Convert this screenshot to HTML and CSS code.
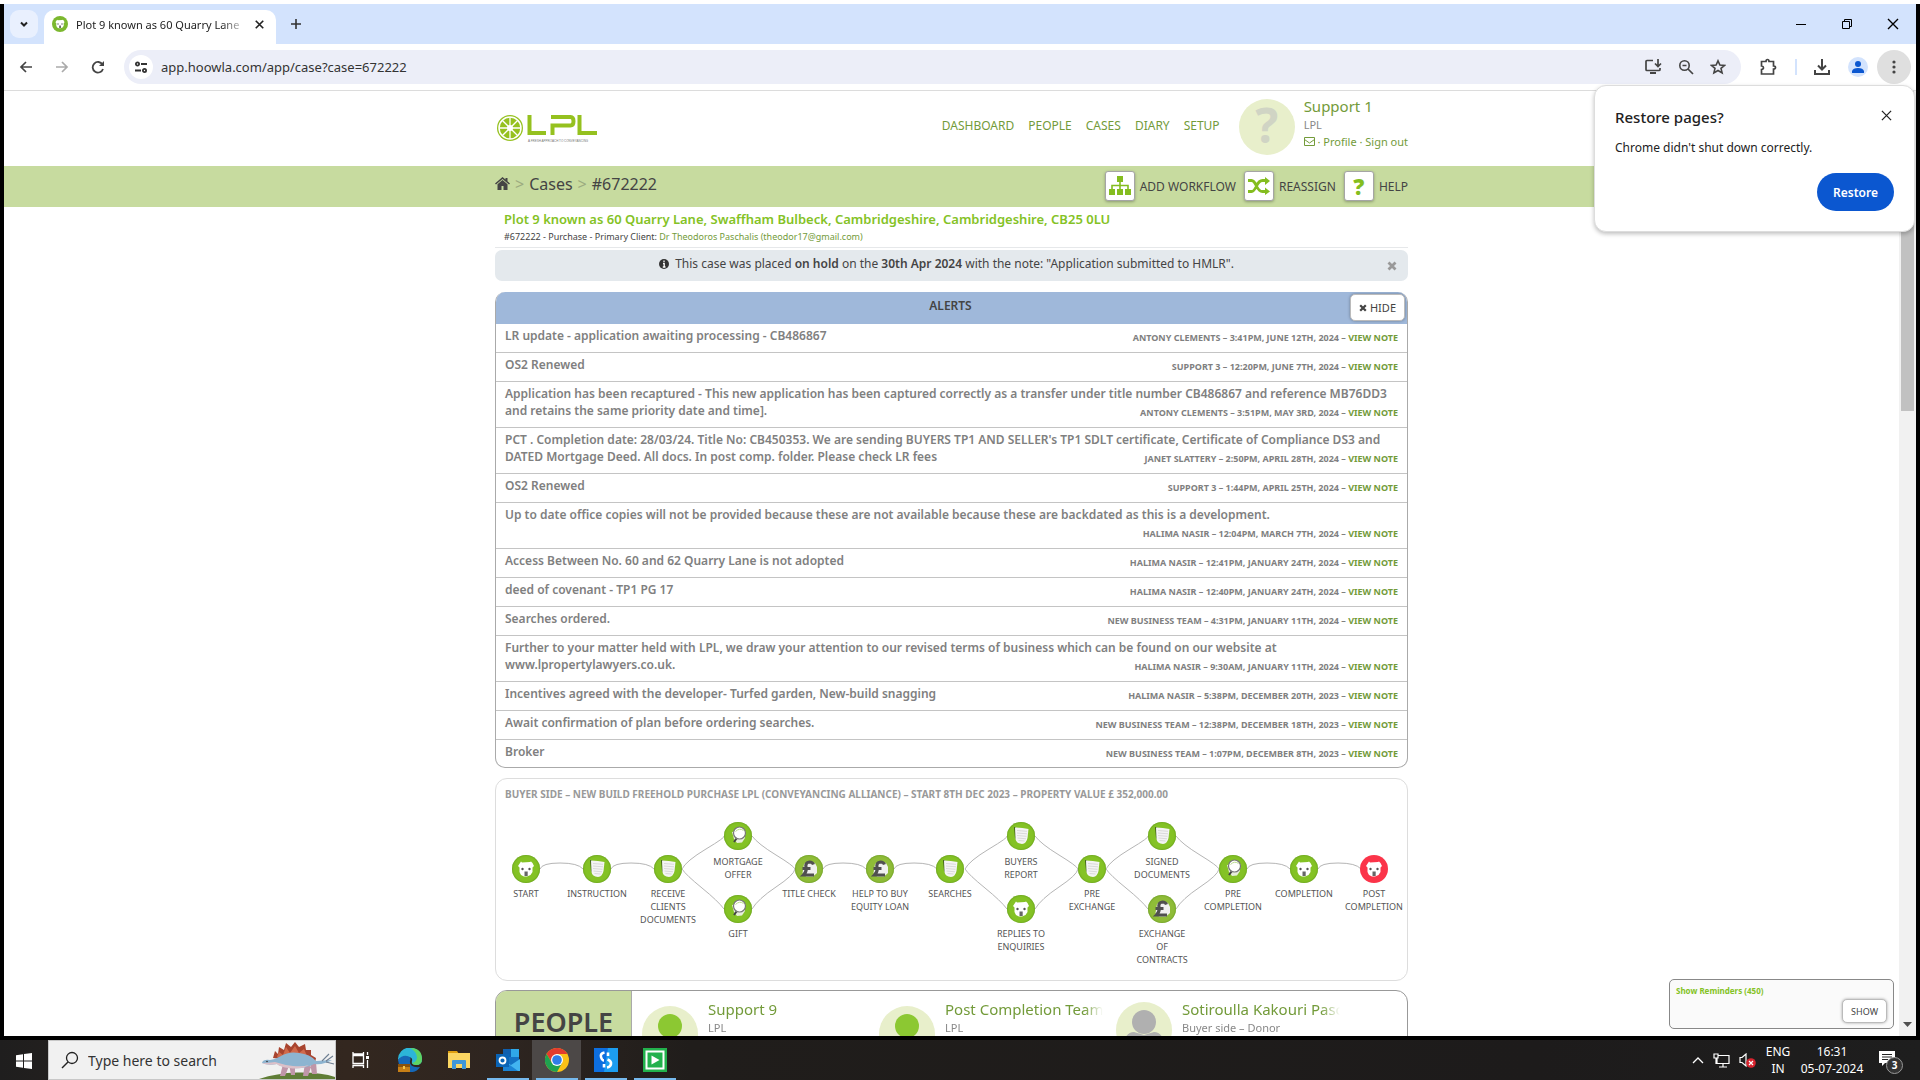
FILE: index.html
```html
<!DOCTYPE html>
<html lang="en">
<head>
<meta charset="utf-8">
<title>Plot 9 known as 60 Quarry Lane</title>
<link rel="stylesheet" href="styles.css">
</head>
<body>
<svg class="defs" aria-hidden="true">
  <defs>
    <symbol id="i-house" viewBox="0 0 28 28">
      <path d="M6 11l2-3 1-1.500 1 1 8-.5 1-.5 1.500 1.500L22 11l-1.500 1.500V17l-2 3-3.500 1.500h-3L9 20l-1.500-3v-4.500z" fill="#fff"/>
      <circle cx="10.500" cy="14" r="1.200" fill="#555"/><circle cx="17.500" cy="14" r="1.200" fill="#555"/>
      <path d="M12.500 16.500h3.200V21h-3.200z" fill="#666"/>
    </symbol>
    <symbol id="i-doc" viewBox="0 0 28 28">
      <path d="M7 5l2 .5v12L8 16z" fill="#3d5a1e"/>
      <path d="M8 5.500q7 0 13.500 1.500l-1 9q-1 5.500-5.500 6-6-.5-6.500-5z" fill="#f4f4f4"/>
      <path d="M10 8.500l10 .8M10 11l10 .8M10 13.500l9.500 .8M10.500 16l8.500 .8M11.500 18.500l6 .5" stroke="#d2d2d2" stroke-width=".8"/>
    </symbol>
    <symbol id="i-lens" viewBox="0 0 28 28">
      <path d="M8 10l2 7 3 4 5-.5 3-4.500 0-8z" fill="#e8eedd"/>
      <path d="M12.500 16.500l-2.500 3.500" stroke="#444" stroke-width="2"/>
      <circle cx="15.500" cy="11" r="6" fill="#fff" stroke="#777" stroke-width="1.200"/>
      <path d="M11.500 9.500q4-4 8-1" stroke="#b9d98c" fill="none"/>
    </symbol>
    <symbol id="i-pound" viewBox="0 0 28 28">
      <path d="M9 9l5-2.500 6 1.500 2 4v6l-4 3.500h-7L7.500 18z" fill="#f0f0f0"/>
      <path d="M18.500 9.500q-1-2.500-4-2.500-4.500.5-3.500 5.500.8 4-2.500 7.500H19M7.500 13.500h8" fill="none" stroke="#505050" stroke-width="3.200"/>
    </symbol>
    <symbol id="i-x" viewBox="0 0 10 10"><path d="M1.500 1.500l7 7M8.500 1.500l-7 7" stroke="currentColor" stroke-width="2.800"/></symbol>
    <symbol id="i-thin" viewBox="0 0 12 12"><path d="M1 1l10 10M11 1L1 11" stroke="currentColor" stroke-width="1.400"/></symbol>
    <symbol id="i-bold" viewBox="0 0 12 12"><path d="M1 1l10 10M11 1L1 11" stroke="currentColor" stroke-width="2.200"/></symbol>
  </defs>
</svg>

<div class="browser">
  <div class="tabstrip">
    <button class="tabsearch" aria-label="Search tabs"><svg width="10" height="10" viewBox="0 0 10 10"><path d="M2 3.500l3 3 3-3" fill="none" stroke="#222" stroke-width="2"/></svg></button>
    <div class="tab">
      <svg class="favicon" width="16" height="16" viewBox="0 0 28 28"><circle cx="14" cy="14" r="14" fill="#7cb82f"/><use href="#i-house"/></svg>
      <span class="tabtitle">Plot 9 known as 60 Quarry Lane</span>
      <button class="plain" aria-label="Close tab"><svg width="9" height="9"><use href="#i-bold"/></svg></button>
    </div>
    <button class="plain newtab" aria-label="New tab"><svg width="12" height="12" viewBox="0 0 12 12"><path d="M6 1v10M1 6h10" stroke="#333" stroke-width="1.600"/></svg></button>
    <div class="winbtns">
      <button class="plain" aria-label="Minimise"><svg width="12" height="12" viewBox="0 0 12 12"><path d="M1 6.500h10" stroke="#000"/></svg></button>
      <button class="plain" aria-label="Restore window"><svg width="12" height="12" viewBox="0 0 12 12"><path d="M1.500 3.500h7v7h-7zM3.500 3.500v-2h7v7h-2" fill="none" stroke="#000"/></svg></button>
      <button class="plain" aria-label="Close window"><svg width="12" height="12"><use href="#i-thin"/></svg></button>
    </div>
  </div>

  <div class="toolbar">
    <div class="navbtns">
      <button class="plain" aria-label="Back"><svg width="14" height="14" viewBox="0 0 14 14"><path d="M13 7H2M7 2L2 7l5 5" fill="none" stroke="#444" stroke-width="1.700"/></svg></button>
      <button class="plain" aria-label="Forward"><svg width="14" height="14" viewBox="0 0 14 14"><path d="M1 7h11M7 2l5 5-5 5" fill="none" stroke="#aaa" stroke-width="1.700"/></svg></button>
      <button class="plain" aria-label="Reload"><svg width="14" height="14" viewBox="0 0 14 14"><path d="M11.500 4.500A5.300 5.300 0 1 0 12 9" fill="none" stroke="#444" stroke-width="1.800"/><path d="M13 1v5H8z" fill="#444"/></svg></button>
    </div>
    <div class="omnibox">
      <span class="siteinfo"><svg width="14" height="14" viewBox="0 0 14 14"><g fill="none" stroke="#333" stroke-width="1.800"><circle cx="3.500" cy="4" r="1.600"/><path d="M7 4h6M1 10.500h6"/><circle cx="10.500" cy="10.500" r="1.600"/></g></svg></span>
      <input class="url" aria-label="Address" value="app.hoowla.com/app/case?case=672222">
      <button class="plain" aria-label="Install app"><svg width="18" height="18" viewBox="0 0 18 18"><path d="M9 2.500H3q-1 0-1 1v8q0 1 1 1h12q1 0 1-1V10" fill="none" stroke="#444" stroke-width="1.700"/><path d="M6 14h6v2H6z" fill="#444"/><path d="M14 1v7M11 5.500l3 3 3-3" fill="none" stroke="#444" stroke-width="1.700"/></svg></button>
      <button class="plain" aria-label="Zoom"><svg width="16" height="16" viewBox="0 0 16 16"><circle cx="6.500" cy="6.500" r="4.700" fill="none" stroke="#444" stroke-width="1.600"/><path d="M4.500 6.500h4M10 10l5 5" stroke="#444" stroke-width="1.700"/></svg></button>
      <button class="plain" aria-label="Bookmark"><svg width="16" height="16" viewBox="0 0 16 16"><path d="M8 1.800l1.900 4.200 4.600.4-3.500 3 1.100 4.500L8 11.500l-4.100 2.400L5 9.400l-3.500-3 4.600-.4z" fill="none" stroke="#444" stroke-width="1.600"/></svg></button>
    </div>
    <button class="plain ext" aria-label="Extensions"><svg width="18" height="18" viewBox="0 0 18 18"><path d="M2.500 3.500h4.500q0-2 1.500-2t1.500 2h4.500V8q2 0 2 1.500T14.500 11v5h-12v-4.500q2-.2 2-1.700t-2-1.800z" fill="none" stroke="#444" stroke-width="1.700"/></svg></button>
    <span class="sep"></span>
    <button class="plain dl" aria-label="Downloads"><svg width="18" height="18" viewBox="0 0 18 18"><path d="M9 1v10M5 7.500l4 4 4-4M2 12v4h14v-4" fill="none" stroke="#444" stroke-width="2"/></svg></button>
    <button class="plain profile" aria-label="Profile"><svg width="20" height="20" viewBox="0 0 20 20"><circle cx="10" cy="10" r="10" fill="#d3e3fd"/><circle cx="10" cy="7" r="3" fill="#0b57d0"/><path d="M4 16v-2q1-3 6-3t6 3v2z" fill="#0b57d0"/></svg></button>
    <button class="plain kebab" aria-label="Menu"><svg width="4" height="14" viewBox="0 0 4 14"><g fill="#444"><circle cx="2" cy="2" r="1.600"/><circle cx="2" cy="7" r="1.600"/><circle cx="2" cy="12" r="1.600"/></g></svg></button>
  </div>

  <div class="viewport">
    <div class="page">
      <header class="wrap top">
        <svg class="logo" width="102" height="32" viewBox="0 0 102 32" role="img" aria-label="LPL">
          <circle cx="15" cy="14" r="13" fill="#95c11f"/><circle cx="15" cy="14" r="11" fill="none" stroke="#fff" stroke-width="1.500"/>
          <path d="M15 3v22M4 14h22M7.200 6.200l15.600 15.600M22.800 6.200L7.200 21.800" stroke="#fff" stroke-width="1.300"/><circle cx="15" cy="14" r="3" fill="#fff"/>
          <path d="M34.500 1v18H51M57.500 21V11.500h18q3 0 3-4.200t-3-4.300H56M84.500 1v18H102" fill="none" stroke="#95c11f" stroke-width="4"/>
          <text x="33" y="28" class="tagline">A FRESH APPROACH TO CONVEYANCING</text>
        </svg>
        <nav class="mainnav"><a href="#">DASHBOARD</a><a href="#">PEOPLE</a><a href="#">CASES</a><a href="#">DIARY</a><a href="#">SETUP</a></nav>
        <span class="avatar qmark">?</span>
        <div class="who">
          <a class="name" href="#">Support 1</a>
          <span class="firm">LPL</span>
          <span class="links"><a href="#" aria-label="Mail"><svg width="11" height="9" viewBox="0 0 11 9"><path d="M.5.500h10v8H.5zM.5 2.500l5 3.500 5-3.500" fill="none" stroke="#739b3a"/></svg></a> · <a href="#">Profile</a> · <a href="#">Sign out</a></span>
        </div>
      </header>

      <div class="crumbbar">
        <div class="wrap crumbs">
          <nav class="trail" aria-label="Breadcrumb">
            <a href="#" aria-label="Home"><svg width="15" height="13" viewBox="0 0 15 13"><path d="M7.500 0L0 6.500l1 1L7.500 2 14 7.500l1-1-2.500-2.200V1h-2v1.600z" fill="#444"/><path d="M7.500 3L2.500 7.300V13h4V9h2v4h4V7.300z" fill="#444"/></svg></a>
            <i>&gt;</i><a href="#">Cases</a><i>&gt;</i><span>#672222</span>
          </nav>
          <div class="actions">
            <button class="action"><span class="box"><svg width="22" height="20" viewBox="0 0 22 20"><path d="M8 0h6v6H8zM0 13h6v6H0zM8 13h6v6H8zM16 13h6v6h-6z" fill="#84bd1f"/><path d="M11 6v7M3 13V9.500h16V13" fill="none" stroke="#84bd1f" stroke-width="1.600"/></svg></span>ADD WORKFLOW</button>
            <button class="action"><span class="box"><svg width="22" height="18" viewBox="0 0 22 18"><path d="M0 3.500h3.500Q6 3.500 8.500 9t6 5.500H18M0 14.500h3.500Q6 14.500 8.500 9t6-5.500H18" fill="none" stroke="#84bd1f" stroke-width="2.800"/><path d="M17 0l5 4-5 4zM17 10.500l5 4-5 3.500z" fill="#84bd1f"/></svg></span>REASSIGN</button>
            <button class="action"><span class="box help">?</span>HELP</button>
          </div>
        </div>
      </div>

      <main class="wrap">
        <div class="casehead">
          <h1>Plot 9 known as 60 Quarry Lane, Swaffham Bulbeck, Cambridgeshire, Cambridgeshire, CB25 0LU</h1>
          <p>#672222 - Purchase - Primary Client: <a href="#">Dr Theodoros Paschalis (theodor17@gmail.com)</a></p>
        </div>

        <div class="hold">
          <p><svg width="10" height="10" viewBox="0 0 10 10"><circle cx="5" cy="5" r="5" fill="#333"/><path d="M5 1.500v1.500M4 4.500h1.200V8M3.800 8h2.700" stroke="#fff" stroke-width="1.300" fill="none"/></svg> This case was placed <b>on hold</b> on the <b>30th Apr 2024</b> with the note: "Application submitted to HMLR".</p>
          <button class="plain" aria-label="Dismiss"><svg width="10" height="10"><use href="#i-x"/></svg></button>
        </div>

        <section class="alerts">
          <header><h2>ALERTS</h2><button class="btn"><svg width="8" height="8"><use href="#i-x"/></svg> HIDE</button></header>
          <ul>
            <li>LR update - application awaiting processing - CB486867<small>Antony Clements – 3:41pm, June 12th, 2024 – <a href="#">View note</a></small></li>
            <li>OS2 Renewed<small>Support 3 – 12:20pm, June 7th, 2024 – <a href="#">View note</a></small></li>
            <li>Application has been recaptured - This new application has been captured correctly as a transfer under title number CB486867 and reference MB76DD3 and retains the same priority date and time].<small>Antony Clements – 3:51pm, May 3rd, 2024 – <a href="#">View note</a></small></li>
            <li>PCT . Completion date: 28/03/24. Title No: CB450353. We are sending BUYERS TP1 AND SELLER's TP1 SDLT certificate, Certificate of Compliance DS3 and DATED Mortgage Deed. All docs. In post comp. folder. Please check LR fees<small>Janet Slattery – 2:50pm, April 28th, 2024 – <a href="#">View note</a></small></li>
            <li>OS2 Renewed<small>Support 3 – 1:44pm, April 25th, 2024 – <a href="#">View note</a></small></li>
            <li>Up to date office copies will not be provided because these are not available because these are backdated as this is a development.<small>Halima Nasir – 12:04pm, March 7th, 2024 – <a href="#">View note</a></small></li>
            <li>Access Between No. 60 and 62 Quarry Lane is not adopted<small>Halima Nasir – 12:41pm, January 24th, 2024 – <a href="#">View note</a></small></li>
            <li>deed of covenant - TP1 PG 17<small>Halima Nasir – 12:40pm, January 24th, 2024 – <a href="#">View note</a></small></li>
            <li>Searches ordered.<small>New Business Team – 4:31pm, January 11th, 2024 – <a href="#">View note</a></small></li>
            <li>Further to your matter held with LPL, we draw your attention to our revised terms of business which can be found on our website at www.lpropertylawyers.co.uk.<small>Halima Nasir – 9:30am, January 11th, 2024 – <a href="#">View note</a></small></li>
            <li>Incentives agreed with the developer- Turfed garden, New-build snagging<small>Halima Nasir – 5:38pm, December 20th, 2023 – <a href="#">View note</a></small></li>
            <li>Await confirmation of plan before ordering searches.<small>New Business Team – 12:38pm, December 18th, 2023 – <a href="#">View note</a></small></li>
            <li>Broker<small>New Business Team – 1:07pm, December 8th, 2023 – <a href="#">View note</a></small></li>
          </ul>
        </section>

        <section class="flow">
          <h2>BUYER SIDE – NEW BUILD FREEHOLD PURCHASE LPL (CONVEYANCING ALLIANCE) – START 8TH DEC 2023 – PROPERTY VALUE £ 352,000.00</h2>
          <div class="canvas">
            <svg class="links-layer" width="911" height="160" viewBox="0 0 911 160" fill="none" stroke="#b5b5b5">
              <path d="M44 58q2-6 20-6t23 6M115 58q2-6 20-6t23 6M327 58q2-6 20-6t23 6M398 58q2-6 20-6t23 6M751 58q2-6 20-6t23 6M822 58q2-6 20-6t23 6"/>
              <path d="M186 58Q190 50 210 38T228 25M256 25Q262 33 280 44T299 58M186 58Q190 64 206 77T228 98M256 98Q262 88 280 76T299 58"/>
              <path d="M469 58Q473 50 493 38T511 25M539 25Q545 33 563 44T582 58M469 58Q473 64 489 77T511 98M539 98Q545 88 563 76T582 58"/>
              <path d="M610 58Q614 50 634 38T652 25M680 25Q686 33 704 44T723 58M610 58Q614 64 630 77T652 98M680 98Q686 88 704 76T723 58"/>
            </svg>
            <div class="node c0 mid"><svg><use href="#i-house"/></svg>START</div>
            <div class="node c1 mid"><svg><use href="#i-doc"/></svg>INSTRUCTION</div>
            <div class="node c2 mid"><svg><use href="#i-doc"/></svg>RECEIVE CLIENTS DOCUMENTS</div>
            <div class="node c3 up"><svg><use href="#i-lens"/></svg>MORTGAGE OFFER</div>
            <div class="node c3 low"><svg><use href="#i-lens"/></svg>GIFT</div>
            <div class="node c4 mid money"><svg><use href="#i-pound"/></svg>TITLE CHECK</div>
            <div class="node c5 mid money"><svg><use href="#i-pound"/></svg>HELP TO BUY EQUITY LOAN</div>
            <div class="node c6 mid"><svg><use href="#i-doc"/></svg>SEARCHES</div>
            <div class="node c7 up"><svg><use href="#i-doc"/></svg>BUYERS<br>REPORT</div>
            <div class="node c7 low"><svg><use href="#i-house"/></svg>REPLIES TO ENQUIRIES</div>
            <div class="node c8 mid"><svg><use href="#i-doc"/></svg>PRE<br>EXCHANGE</div>
            <div class="node c9 up"><svg><use href="#i-doc"/></svg>SIGNED DOCUMENTS</div>
            <div class="node c9 low money"><svg><use href="#i-pound"/></svg>EXCHANGE<br>OF<br>CONTRACTS</div>
            <div class="node c10 mid"><svg><use href="#i-lens"/></svg>PRE COMPLETION</div>
            <div class="node c11 mid"><svg><use href="#i-house"/></svg>COMPLETION</div>
            <div class="node c12 mid late"><svg><use href="#i-house"/></svg>POST COMPLETION</div>
          </div>
        </section>

        <section class="people">
          <h2>PEOPLE</h2>
          <div class="person"><svg class="avatar" viewBox="0 0 56 56" fill="#8cc832"><circle cx="28" cy="20" r="12"/><path d="M8 56q0-22 20-22t20 22z"/></svg><div class="ptext"><a class="name" href="#">Support 9</a><span class="firm">LPL</span></div></div>
          <div class="person"><svg class="avatar" viewBox="0 0 56 56" fill="#8cc832"><circle cx="28" cy="20" r="12"/><path d="M8 56q0-22 20-22t20 22z"/></svg><div class="ptext"><a class="name" href="#">Post Completion Team</a><span class="firm">LPL</span></div></div>
          <div class="person donor"><svg class="avatar" viewBox="0 0 56 56" fill="#b0b0b0"><circle cx="28" cy="20" r="12"/><path d="M6 56q0-26 12-26l10 3 10-3q12 0 12 26z"/></svg><div class="ptext"><a class="name" href="#">Sotiroulla Kakouri Paschalis</a><span class="firm">Buyer side – Donor</span></div></div>
        </section>
      </main>
    </div>
    <div class="scrollbar"><span class="thumb"></span><svg width="9" height="5" viewBox="0 0 9 5"><path d="M0 0h9L4.500 5z" fill="#505050"/></svg></div>

    <aside class="reminders"><b>Show Reminders (450)</b><button class="btn">SHOW</button></aside>
  </div>

  <div class="restore" role="dialog" aria-label="Restore pages?">
    <div class="rhead"><h2>Restore pages?</h2><button class="plain" aria-label="Close"><svg width="11" height="11"><use href="#i-thin"/></svg></button></div>
    <p>Chrome didn't shut down correctly.</p>
    <button class="primary">Restore</button>
  </div>
</div>

<footer class="taskbar">
  <button class="start" aria-label="Start"><svg width="16" height="16" viewBox="0 0 16 16"><path d="M0 2.200L7 1.200V7.500H0zM8 1l8-1v7.500H8zM0 8.500h7v6.300l-7-1zM8 8.500h8V16l-8-1z" fill="#fff"/></svg></button>
  <label class="search">
    <svg width="18" height="18" viewBox="0 0 18 18"><circle cx="11" cy="7" r="5.500" fill="none" stroke="#222" stroke-width="1.300"/><path d="M7 11l-6 6" stroke="#222" stroke-width="1.500"/></svg>
    <input aria-label="Search" placeholder="Type here to search">
    <svg class="dino" width="76" height="38" viewBox="0 0 76 38">
      <path d="M0 38q18-6 38-6.500 24-.5 38 4.500v2z" fill="#5f7d36"/>
      <path d="M14 17l2-7 3 3 1-7 5 3 2-7 5 4 4-5 4 5 6-3 1 6 5 0 0 5 5 3-1 5z" fill="#a8442f"/>
      <path d="M18 16l2-5 4 3 3-8 4 6 5-7 4 7 5-4 3 7z" fill="#d06a4c"/>
      <path d="M24 23l-3 12h5l4-10zM46 22l-2 13h5l3-9zM51 22l2 11h5l-1-12zM30 23l2 11h4l0-11z" fill="#bf96a8"/>
      <path d="M3 22q1-4 8-3 6-1 11-4 8-5 18-3 11 1 17 8l16-1q-8 5-18 4-8 5-22 4-11-1-15-4-9 2-15-1z" fill="#8db4d0"/>
      <path d="M3 22q7 0 13-1 9 3 18 4 10 1 16-1-8 5-20 3-9-1-12-4-9 2-15-1z" fill="#dcc0c8"/>
      <circle cx="8" cy="20.500" r=".8" fill="#333"/>
      <path d="M63 20l7-7M67 20l7-5M67 21l8 2" stroke="#6f7f92" stroke-width="1.100"/>
    </svg>
  </label>
  <button class="task" aria-label="Task View"><svg width="18" height="18" viewBox="0 0 18 18" fill="none" stroke="#fff" stroke-width="1.300"><path d="M1 4.500h10.500v8H1zM1 1v2h10.500V1M1 17v-2.500h10.500V17M15.500 1v3M15.500 9v8"/><path d="M14 5h3v3h-3z" fill="#fff" stroke="none"/></svg></button>
  <button class="task" aria-label="Edge"><svg width="24" height="24" viewBox="0 0 24 24"><path d="M0 12A12 12 0 0 1 24 11q0 6-6 6-5 0-4-4 1-3-3-4-7-1-11 3z" fill="#2cb5d8"/><path d="M12 0q12 0 12 11 0 6-6 6-3 0-4-2 5-1 5-6Q18 3 12 0z" fill="#5ed464"/><path d="M0 12q4-5 9-4 5 1 3 5-1 7 10 6-4 6-11 5Q1 23 0 12z" fill="#1668b8"/><path d="M0 16h12v8H0z" fill="#c77f16"/><path d="M0 16h12v3H0z" fill="#8a520c"/><path d="M5 18h2v3H5z" fill="#f6c445"/></svg></button>
  <button class="task" aria-label="File Explorer"><svg width="22" height="20" viewBox="0 0 22 20"><path d="M0 1h9l2 3H0z" fill="#e0a010"/><path d="M0 3h22v15H0z" fill="#fbd662"/><path d="M4 19v-8q0-1 1-1h12q1 0 1 1v8h-4v-5H8v5z" fill="#3f97d8"/></svg></button>
  <button class="task open" aria-label="Outlook"><svg width="24" height="24" viewBox="0 0 24 24"><path d="M7 1h16v16H7z" fill="#1372c4"/><path d="M7 1h8v8H7z" fill="#0f5fae"/><path d="M15 1h8v8h-8z" fill="#2fa8e8"/><path d="M7 12l8 5 9-6v12H7z" fill="#42b4f0"/><path d="M7 12l15 11H7z" fill="#1b83d4"/><path d="M0 6h13v13H0z" fill="#0a64b6"/><circle cx="6.500" cy="12.500" r="3" fill="none" stroke="#fff" stroke-width="1.800"/></svg></button>
  <button class="task open active" aria-label="Chrome"><svg width="24" height="24" viewBox="0 0 24 24"><circle cx="12" cy="12" r="12" fill="#fbc116"/><path d="M1.600 6A12 12 0 0 1 22.400 6H12l-5 9z" fill="#e33b2e"/><path d="M1.600 6A12 12 0 0 0 12 24l5-9-10 0z" fill="#1fa250"/><circle cx="12" cy="12" r="6" fill="#fff"/><circle cx="12" cy="12" r="4.800" fill="#2f7de8"/></svg></button>
  <button class="task open" aria-label="Scan app"><svg width="24" height="24" viewBox="0 0 24 24"><path d="M0 0h24v24H0z" fill="#0d6fe0"/><path d="M14 0h10v24H10z" fill="#1c9df0"/><path d="M10.500 4.500Q6 5.500 7 9t3 3.500M10 16v3.500M14 4.500V8M13.500 11.500q4 1.500 3.500 4.500t-4 3.500" fill="none" stroke="#fff" stroke-width="2.600"/></svg></button>
  <button class="task open" aria-label="Player"><svg width="24" height="24" viewBox="0 0 24 24"><path d="M0 0h24v24H0z" fill="#22b14c"/><path d="M3.500 3.500h17v17h-17z" fill="none" stroke="#fff" stroke-width="2"/><path d="M8.500 7.500l8 4.500-8 4.500z" fill="#fff"/></svg></button>
  <div class="tray">
    <svg width="12" height="8" viewBox="0 0 12 8"><path d="M1 7l5-5 5 5" fill="none" stroke="#fff" stroke-width="1.300"/></svg>
    <svg width="17" height="15" viewBox="0 0 17 15" fill="none" stroke="#fff" stroke-width="1.200"><path d="M5 2.500h11v8H4V5M10 10.500v3M6 14h8M1 1h4v4H1zM3 5v6"/></svg>
    <svg width="17" height="15" viewBox="0 0 17 15"><path d="M1 4.500h2l4-3.500v12L3 9.500H1z" fill="none" stroke="#fff" stroke-width="1.200"/><circle cx="12" cy="10" r="4.800" fill="#d8232e"/><path d="M10 8l4 4M14 8l-4 4" stroke="#fff" stroke-width="1.200"/></svg>
    <span class="lang">ENG<br>IN</span>
    <span class="clock">16:31<br>05-07-2024</span>
    <span class="notes"><svg width="16" height="16" viewBox="0 0 16 16"><path d="M0 0h16v12H6l-3 3v-3H0z" fill="#fff"/><path d="M3 3.500h10M3 6h10M3 8.500h6" stroke="#222"/></svg><b>3</b></span>
  </div>
</footer>
</body>
</html>
```
FILE: styles.css
```css
* { box-sizing: border-box; }
html, body { height: 100%; }
body {
  margin: 0;
  display: flex;
  flex-direction: column;
  background: #000;
  border-top: 4px solid #fff;
  overflow: hidden;
  font-family: "Noto Sans", "Open Sans", sans-serif;
  font-size: 12px;
  color: #444;
}
h1, h2, p, ul { margin: 0; padding: 0; }
ul { list-style: none; }
a { color: #739b3a; text-decoration: none; }
button, input { font: inherit; color: inherit; }
svg { flex: none; }
.defs { position: absolute; width: 0; height: 0; }
.plain { border: 0; background: none; padding: 0; display: flex; align-items: center; justify-content: center; }

/* Browser frame */
.browser {
  position: relative;
  flex: 1;
  min-height: 0;
  margin: 0 4px 4px;
  display: flex;
  flex-direction: column;
  background: #fff;
}
.tabstrip { display: flex; height: 40px; background: #d3e3fd; padding-left: 6px; }
.tabsearch { width: 28px; height: 28px; margin-top: 6px; border: 0; border-radius: 9px; background: #e9f0fe; padding: 0; }
.tab {
  display: flex;
  align-items: center;
  gap: 8px;
  width: 232px;
  margin: 6px 0 0 6px;
  padding: 0 12px 6px 8px;
  border-radius: 10px 10px 0 0;
  background: #fff;
  color: #222;
}
.tabtitle {
  flex: 1;
  overflow: hidden;
  white-space: nowrap;
  font-size: 11px;
  -webkit-mask-image: linear-gradient(to right, #000 85%, transparent);
  mask-image: linear-gradient(to right, #000 85%, transparent);
}
.newtab { width: 40px; }
.winbtns { display: flex; margin-left: auto; }
.winbtns button { width: 46px; color: #000; }
.toolbar {
  display: flex;
  align-items: center;
  height: 47px;
  padding-right: 5px;
  border-bottom: 1px solid #dcdcdc;
  background: #fff;
}
.navbtns { display: flex; padding-left: 4px; }
.navbtns button { width: 36px; height: 34px; }
.omnibox {
  flex: 1;
  display: flex;
  align-items: center;
  height: 34px;
  margin-left: 8px;
  padding: 0 15px 0 5px;
  gap: 16px;
  border-radius: 17px;
  background: #eceef8;
}
.siteinfo { display: flex; align-items: center; justify-content: center; width: 24px; height: 24px; border-radius: 50%; background: #fff; }
.url { flex: 1; margin-left: -8px; border: 0; padding: 0; background: none; font-size: 13px; color: #333; outline: 0; }
.ext { width: 54px; }
.sep { width: 2px; height: 16px; background: #d3e3fd; }
.dl { width: 50px; }
.profile { width: 22px; }
.kebab { width: 34px; height: 34px; margin-left: 8px; border-radius: 50%; background: #dfdfdf; }

/* Page */
.viewport { position: relative; flex: 1; min-height: 0; display: flex; overflow: hidden; }
.page { flex: 1; min-width: 0; overflow: hidden; }
.wrap { width: 100%; max-width: 913px; margin: 0 auto; }
.scrollbar { display: flex; flex-direction: column; justify-content: space-between; align-items: center; width: 17px; background: #f1f1f1; padding-bottom: 9px; }
.thumb { width: 13px; height: 320px; background: #c1c1c1; }

.top { display: flex; height: 75px; }
.logo { margin-top: 23px; }
.tagline { font: 3px "Liberation Sans", sans-serif; fill: #777; }
.mainnav { display: flex; gap: 14px; margin: 26px 19px 0 auto; line-height: 17px; }
.avatar { width: 56px; height: 56px; border-radius: 50%; background: #e8efcb; }
.qmark { margin: 8px 9px 0 0; text-align: center; font-size: 48px; line-height: 52px; font-weight: 700; color: #d0d4c4; }
.who { display: flex; flex-direction: column; padding-top: 4px; color: #888; }
.name { font-size: 15px; line-height: 22px; }
.who .links { font-size: 11px; line-height: 17px; color: #739b3a; }
.who .firm { font-size: 11px; line-height: 16px; }

.crumbbar { background: #c7db9f; }
.crumbs { display: flex; align-items: center; height: 41px; padding-bottom: 1px; }
.trail { display: flex; align-items: center; gap: 5px; padding-bottom: 4px; font-size: 16px; }
.trail a { color: #444; }
.trail i { font-style: normal; color: #9cab80; }
.actions { display: flex; gap: 8px; margin-left: auto; }
.action { display: flex; align-items: center; gap: 5px; border: 0; background: none; padding: 0; font-size: 12px; color: #444; }
.box { display: flex; align-items: center; justify-content: center; width: 30px; height: 30px; border: 1px solid #a5a5a5; border-radius: 3px; background: #fff; box-shadow: 0 1px 3px rgba(0, 0, 0, .3); }
.help { font-size: 22px; font-weight: 900; color: #84bd1f; }

.casehead { padding: 2px 9px 0; height: 41px; border-bottom: 1px solid #e6e8ea; }
.casehead h1 { font-size: 13px; line-height: 20px; font-weight: 600; color: #84c225; white-space: nowrap; }
.casehead p { font-size: 9px; line-height: 15px; }

.hold { display: flex; align-items: center; height: 31px; margin-top: 2px; padding: 0 11px; border-radius: 7px; background: #e4e9ed; color: #444; }
.hold p { flex: 1; text-align: center; padding-bottom: 4px; }
.hold b { font-weight: 600; }
.hold p svg { vertical-align: -1px; margin-right: 3px; }
.hold button { color: #999; }

.btn { border: 1px solid #bbb; border-radius: 5px; background: #fff; padding: 0 8px; height: 27px; font-size: 11px; color: #444; box-shadow: 0 0 3px rgba(0, 0, 0, .35); }
.alerts { margin-top: 11px; border: 1px solid #aaa; border-top: 0; border-radius: 10px; overflow: hidden; }
.alerts header { display: grid; grid-template-columns: 1fr auto 1fr; align-items: center; height: 32px; padding: 0 2px 1px 0; background: #9fb8da; }
.alerts h2 { grid-column: 2; font-size: 12px; line-height: 16px; font-weight: 600; padding-bottom: 3px; }
.alerts .btn { justify-self: end; }
.alerts li { display: flow-root; padding: 3px 9px 8px; border-bottom: 1px solid #c4c4c4; line-height: 17px; font-weight: 600; color: #808080; }
.alerts li:last-child { border-bottom: 0; padding-bottom: 7px; }
.alerts small { float: right; margin-top: 5px; font-size: 9px; line-height: 12px; font-weight: 700; text-transform: uppercase; }

.flow { margin-top: 10px; height: 203px; border: 1px solid #ddd; border-radius: 12px; }
.flow h2 { padding: 6px 9px 0; font-size: 10px; line-height: 18px; font-weight: 700; color: #999; white-space: nowrap; }
.canvas { position: relative; margin-top: 8px; height: 160px; }
.links-layer { position: absolute; top: 0; left: 0; }
.node { position: absolute; width: 72px; margin-left: -36px; text-align: center; font-size: 9px; line-height: 13px; color: #555; }
.node svg { display: block; width: 28px; height: 28px; margin: 0 auto 4px; border-radius: 50%; background: #84c225; box-shadow: inset 0 0 2px #4f8510; }
.money svg { background: #8fbc38; }
.late svg { background: #fb3449; box-shadow: none; }
.up svg { margin-bottom: 5px; }
.up { top: 11px; }
.mid { top: 44px; }
.low { top: 84px; }
.c0 { left: 30px; }
.c1 { left: 101px; }
.c2 { left: 172px; }
.c3 { left: 242px; }
.c4 { left: 313px; }
.c5 { left: 384px; }
.c6 { left: 454px; }
.c7 { left: 525px; }
.c8 { left: 596px; }
.c9 { left: 666px; }
.c10 { left: 737px; }
.c11 { left: 808px; }
.c12 { left: 878px; }

.people { display: flex; margin-top: 9px; height: 130px; border: 1px solid #999; border-radius: 12px; overflow: hidden; }
.people h2 { width: 136px; margin-right: 10px; padding-top: 11px; border-right: 1px solid #aaa; background: #c7db9f; text-align: center; font-size: 27px; line-height: 40px; font-weight: 600; }
.person { display: flex; gap: 10px; width: 237px; padding-top: 15px; }
.ptext { display: flex; flex-direction: column; width: 158px; margin-top: -8px; white-space: nowrap; overflow: hidden; color: #888; -webkit-mask-image: linear-gradient(to right, #000 88%, transparent); mask-image: linear-gradient(to right, #000 88%, transparent); }
.ptext .firm { font-size: 11px; line-height: 16px; }
.donor { padding-top: 11px; }
.donor .ptext { margin-top: -4px; }

.reminders { position: absolute; right: 22px; bottom: 7px; display: flex; justify-content: space-between; width: 225px; height: 50px; padding: 5px 6px; border: 1px solid #888; border-radius: 5px; background: #fafafa; }
.reminders b { font-size: 8px; line-height: 12px; color: #84c225; }
.reminders .btn { align-self: flex-end; height: 24px; font-size: 9px; }

.restore { position: absolute; top: 81px; right: 1px; width: 321px; height: 147px; padding: 20px; border: 1px solid #ddd; border-radius: 12px; background: #fff; box-shadow: 0 2px 4px rgba(0, 0, 0, .25); color: #222; display: flex; flex-direction: column; }
.rhead { display: flex; justify-content: space-between; padding-right: 2px; }
.rhead button { height: 18px; }
.rhead h2 { font-size: 15px; line-height: 22px; font-weight: 500; }
.restore p { margin-top: 11px; line-height: 18px; }
.primary { align-self: flex-end; margin-top: 16px; width: 77px; height: 38px; border: 0; border-radius: 19px; background: #0b57d0; color: #fff; font-weight: 600; flex: none; }

/* Taskbar */
.taskbar { display: flex; height: 40px; background: linear-gradient(to right, #1f1e1e 0, #33271f 18%, #2e2520 26%, #201d1b 36%, #1d1b1b 80%, #1e1e1e); color: #fff; }
.start { width: 48px; border: 0; background: none; padding: 6px 0 0; }
.search { display: flex; align-items: center; width: 288px; padding-left: 12px; background: #f1f1f1; border: 1px solid #c8c8c8; color: #333; }
.search input { flex: 1; min-width: 0; margin-left: 9px; border: 0; padding: 0; background: none; font-size: 14px; outline: 0; }
.search input::placeholder { color: #333; opacity: 1; }
.dino { align-self: flex-end; }
.task { display: flex; align-items: center; justify-content: center; width: 49px; border: 0; border-bottom: 2px solid transparent; background: none; padding: 2px 0 0; }
.open { border-image: linear-gradient(to right, transparent 5px, #76b9ed 5px, #76b9ed 45px, transparent 45px) 1; border-width: 0 0 2px; border-style: solid; }
.active { background: #4c4847; }
.tray { display: flex; align-items: center; gap: 9px; margin-left: auto; padding-right: 25px; line-height: 17px; text-align: center; white-space: nowrap; }
.lang { width: 26px; }
.clock { width: 64px; }
.notes { position: relative; width: 16px; height: 18px; margin-left: 6px; }
.notes b { position: absolute; left: 7px; top: 6px; width: 17px; height: 17px; border: 1px solid #999; border-radius: 50%; background: #333; font-size: 10px; line-height: 15px; }
```
